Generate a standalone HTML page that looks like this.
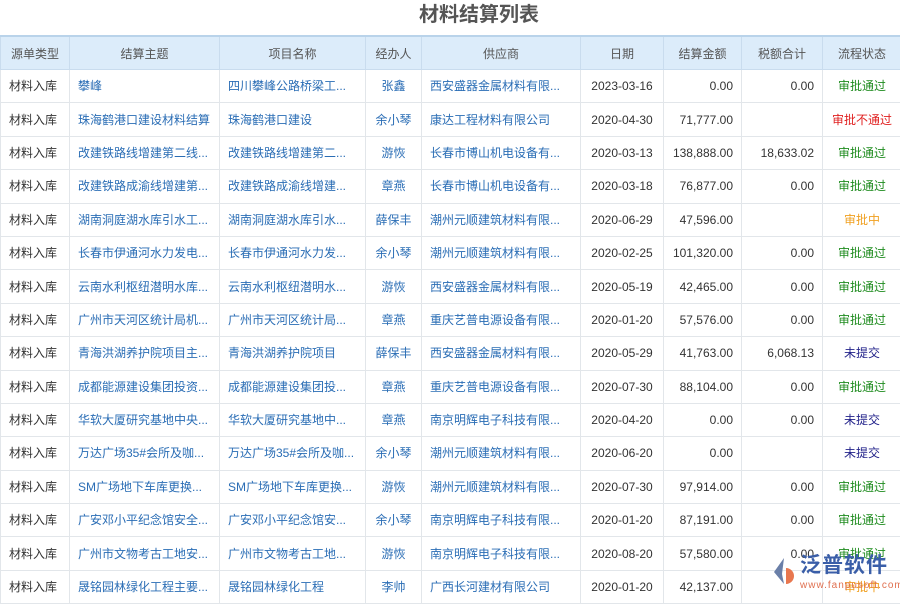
<!DOCTYPE html>
<html><head><meta charset="utf-8"><style>
body{margin:0;width:900px;height:600px;overflow:hidden;background:#fff;font-family:"Liberation Sans","Noto Sans CJK SC",sans-serif;position:relative}
h1{position:absolute;left:0;width:958px;top:1px;margin:0;text-align:center;font-size:20px;font-weight:bold;color:#555;line-height:28px}
table{position:absolute;top:35px;left:0;border-collapse:collapse;table-layout:fixed;width:901px;font-size:12px}
th{background:#dcecfa;color:#555;font-weight:normal;height:32px;padding:0;border:1px solid #c9dcee;border-top:2px solid #b9d3ea}
td{height:32.4px;padding:0 8px;border:1px solid #e2e6ea;color:#333;white-space:nowrap;overflow:hidden;vertical-align:middle;line-height:14px}
td.c{text-align:center}td.r{text-align:right}
.b{color:#2a6db5}.g{color:#1f8c1f}.rd{color:#e02020}.o{color:#f0a020}.n{color:#22228a}
.logo{position:absolute;left:800px;top:554px;font-size:21px;color:#3a5ea8;font-weight:bold;letter-spacing:1px;white-space:nowrap;line-height:24px}
.url{position:absolute;left:800px;top:580px;font-size:10px;color:#e07050;letter-spacing:1px;white-space:nowrap}
</style></head><body>
<h1>材料结算列表</h1>
<table>
<colgroup><col style="width:69px"><col style="width:150px"><col style="width:146px"><col style="width:56px"><col style="width:159px"><col style="width:83px"><col style="width:78px"><col style="width:81px"><col style="width:79px"></colgroup>
<tr><th>源单类型</th><th>结算主题</th><th>项目名称</th><th>经办人</th><th>供应商</th><th>日期</th><th>结算金额</th><th>税额合计</th><th>流程状态</th></tr>
<tr><td>材料入库</td><td class="b">攀峰</td><td class="b">四川攀峰公路桥梁工...</td><td class="c b">张鑫</td><td class="b">西安盛器金属材料有限...</td><td class="c">2023-03-16</td><td class="r">0.00</td><td class="r">0.00</td><td class="c g">审批通过</td></tr>
<tr><td>材料入库</td><td class="b">珠海鹤港口建设材料结算</td><td class="b">珠海鹤港口建设</td><td class="c b">余小琴</td><td class="b">康达工程材料有限公司</td><td class="c">2020-04-30</td><td class="r">71,777.00</td><td class="r"></td><td class="c rd">审批不通过</td></tr>
<tr><td>材料入库</td><td class="b">改建铁路线增建第二线...</td><td class="b">改建铁路线增建第二...</td><td class="c b">游恢</td><td class="b">长春市博山机电设备有...</td><td class="c">2020-03-13</td><td class="r">138,888.00</td><td class="r">18,633.02</td><td class="c g">审批通过</td></tr>
<tr><td>材料入库</td><td class="b">改建铁路成渝线增建第...</td><td class="b">改建铁路成渝线增建...</td><td class="c b">章燕</td><td class="b">长春市博山机电设备有...</td><td class="c">2020-03-18</td><td class="r">76,877.00</td><td class="r">0.00</td><td class="c g">审批通过</td></tr>
<tr><td>材料入库</td><td class="b">湖南洞庭湖水库引水工...</td><td class="b">湖南洞庭湖水库引水...</td><td class="c b">薛保丰</td><td class="b">潮州元顺建筑材料有限...</td><td class="c">2020-06-29</td><td class="r">47,596.00</td><td class="r"></td><td class="c o">审批中</td></tr>
<tr><td>材料入库</td><td class="b">长春市伊通河水力发电...</td><td class="b">长春市伊通河水力发...</td><td class="c b">余小琴</td><td class="b">潮州元顺建筑材料有限...</td><td class="c">2020-02-25</td><td class="r">101,320.00</td><td class="r">0.00</td><td class="c g">审批通过</td></tr>
<tr><td>材料入库</td><td class="b">云南水利枢纽潜明水库...</td><td class="b">云南水利枢纽潜明水...</td><td class="c b">游恢</td><td class="b">西安盛器金属材料有限...</td><td class="c">2020-05-19</td><td class="r">42,465.00</td><td class="r">0.00</td><td class="c g">审批通过</td></tr>
<tr><td>材料入库</td><td class="b">广州市天河区统计局机...</td><td class="b">广州市天河区统计局...</td><td class="c b">章燕</td><td class="b">重庆艺普电源设备有限...</td><td class="c">2020-01-20</td><td class="r">57,576.00</td><td class="r">0.00</td><td class="c g">审批通过</td></tr>
<tr><td>材料入库</td><td class="b">青海洪湖养护院项目主...</td><td class="b">青海洪湖养护院项目</td><td class="c b">薛保丰</td><td class="b">西安盛器金属材料有限...</td><td class="c">2020-05-29</td><td class="r">41,763.00</td><td class="r">6,068.13</td><td class="c n">未提交</td></tr>
<tr><td>材料入库</td><td class="b">成都能源建设集团投资...</td><td class="b">成都能源建设集团投...</td><td class="c b">章燕</td><td class="b">重庆艺普电源设备有限...</td><td class="c">2020-07-30</td><td class="r">88,104.00</td><td class="r">0.00</td><td class="c g">审批通过</td></tr>
<tr><td>材料入库</td><td class="b">华软大厦研究基地中央...</td><td class="b">华软大厦研究基地中...</td><td class="c b">章燕</td><td class="b">南京明辉电子科技有限...</td><td class="c">2020-04-20</td><td class="r">0.00</td><td class="r">0.00</td><td class="c n">未提交</td></tr>
<tr><td>材料入库</td><td class="b">万达广场35#会所及咖...</td><td class="b">万达广场35#会所及咖...</td><td class="c b">余小琴</td><td class="b">潮州元顺建筑材料有限...</td><td class="c">2020-06-20</td><td class="r">0.00</td><td class="r"></td><td class="c n">未提交</td></tr>
<tr><td>材料入库</td><td class="b">SM广场地下车库更换...</td><td class="b">SM广场地下车库更换...</td><td class="c b">游恢</td><td class="b">潮州元顺建筑材料有限...</td><td class="c">2020-07-30</td><td class="r">97,914.00</td><td class="r">0.00</td><td class="c g">审批通过</td></tr>
<tr><td>材料入库</td><td class="b">广安邓小平纪念馆安全...</td><td class="b">广安邓小平纪念馆安...</td><td class="c b">余小琴</td><td class="b">南京明辉电子科技有限...</td><td class="c">2020-01-20</td><td class="r">87,191.00</td><td class="r">0.00</td><td class="c g">审批通过</td></tr>
<tr><td>材料入库</td><td class="b">广州市文物考古工地安...</td><td class="b">广州市文物考古工地...</td><td class="c b">游恢</td><td class="b">南京明辉电子科技有限...</td><td class="c">2020-08-20</td><td class="r">57,580.00</td><td class="r">0.00</td><td class="c g">审批通过</td></tr>
<tr><td>材料入库</td><td class="b">晟铭园林绿化工程主要...</td><td class="b">晟铭园林绿化工程</td><td class="c b">李帅</td><td class="b">广西长河建材有限公司</td><td class="c">2020-01-20</td><td class="r">42,137.00</td><td class="r"></td><td class="c o">审批中</td></tr>
</table>
<svg style="position:absolute;left:770px;top:556px" width="30" height="30" viewBox="0 0 30 30"><path d="M14 2 L4 16 L14 28 L12 18 Z" fill="#6a7fa8"/><path d="M16 12 A8 8 0 1 1 16 28 Z" fill="#e8774f"/></svg>
<div class="logo">泛普软件</div>
<div class="url">www.fanpusoft.com</div>
</body></html>
